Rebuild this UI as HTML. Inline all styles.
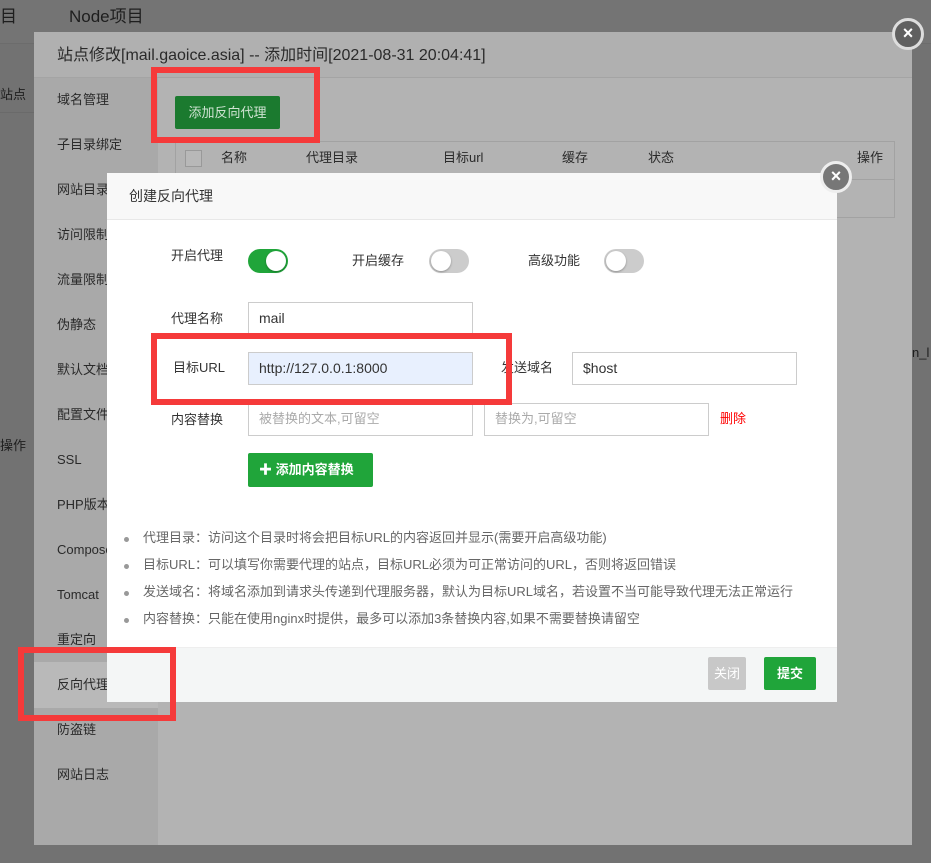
<!DOCTYPE html>
<html><head><meta charset="utf-8"><style>
*{box-sizing:border-box;margin:0;padding:0}
body{width:931px;height:863px;overflow:hidden;background:#727272;font-family:"Liberation Sans","Noto Sans CJK SC",sans-serif;position:relative;font-size:13px;color:#333;line-height:1.2}
.abs{position:absolute}
.d1{left:34px;top:32px;width:878px;height:813px;background:#b3b3b3}
.d1h{left:0;top:0;width:878px;height:46px;background:#b0b0b0;border-bottom:1px solid #a4a4a4;font-size:16px;color:#2a2a2a;padding:14px 0 0 23px}
.side{left:0;top:46px;width:124px;height:767px;background:#a9a9a9}
.side div{position:absolute;left:23px;font-size:13px;color:#2a2a2a;white-space:nowrap}
.m{left:107px;top:173px;width:730px;height:529px;background:#fff}
.mh{left:0;top:0;width:730px;height:47px;background:#f8f8f8;border-bottom:1px solid #e8e8e8;font-size:14px;padding:15px 0 0 22px;color:#333}
.lbl{font-size:13px;color:#333;position:absolute}
.inp{position:absolute;height:33px;border:1px solid #ccc;background:#fff;font-size:14px;color:#333;padding:7px 0 0 10px}
.ph{color:#aaa;font-size:13px}
.tg{position:absolute;width:40px;height:24px;border-radius:12px;background:#ccc}
.tg i{position:absolute;top:2px;width:20px;height:20px;border-radius:50%;background:#fff;box-shadow:0 1px 2px rgba(0,0,0,.3)}
.close{position:absolute;width:32px;height:32px;border-radius:50%;border:3px solid #fff;color:#fff;font-size:18px;text-align:center;line-height:25px;font-weight:bold}
.red{position:absolute;border:6px solid #f53a3a}
li{list-style:none;position:absolute;left:18px;font-size:13px;color:#666;white-space:nowrap}
li:before{content:"";position:absolute;left:-1px;top:7px;width:5px;height:5px;border-radius:50%;background:#999}
li span{margin-left:18px}
</style></head><body>
<div class="abs" style="left:0;top:0;width:931px;height:44px;background:#747474;border-bottom:1px solid #6c6c6c"></div>
<div class="abs" style="left:0;top:7px;font-size:17px;color:#1e1e1e">目</div>
<div class="abs" style="left:69px;top:7px;font-size:17px;color:#1e1e1e">Node项目</div>
<div class="abs" style="left:0;top:87px;font-size:13px;color:#1e1e1e">站点</div>
<div class="abs" style="left:0;top:112px;width:34px;height:1px;background:#6a6a6a"></div>
<div class="abs" style="left:0;top:438px;font-size:13px;color:#1e1e1e">操作</div>
<div class="abs" style="left:912px;top:345px;font-size:13px;color:#1e1e1e">n_l</div>

<div class="abs d1">
 <div class="abs d1h">站点修改[mail.gaoice.asia] -- 添加时间[2021-08-31 20:04:41]</div>
 <div class="abs side">
  <div style="top:14px">域名管理</div>
  <div style="top:59px">子目录绑定</div>
  <div style="top:104px">网站目录</div>
  <div style="top:149px">访问限制</div>
  <div style="top:194px">流量限制</div>
  <div style="top:239px">伪静态</div>
  <div style="top:284px">默认文档</div>
  <div style="top:329px">配置文件</div>
  <div style="top:374px">SSL</div>
  <div style="top:419px">PHP版本</div>
  <div style="top:464px">Composer</div>
  <div style="top:509px">Tomcat</div>
  <div style="top:554px">重定向</div>
  <div style="top:584px;left:0;width:124px;height:46px;background:#b9b9b9"></div>
  <div style="top:599px">反向代理</div>
  <div style="top:644px">防盗链</div>
  <div style="top:689px">网站日志</div>
 </div>
 <div class="abs" style="left:141px;top:64px;width:105px;height:33px;background:#1b7a2f;border-radius:2px;color:#cfe3d2;font-size:13px;text-align:center;line-height:33px">添加反向代理</div>
 <div class="abs" style="left:141px;top:109px;width:720px;height:77px;border:1px solid #a2a2a2"></div>
 <div class="abs" style="left:141px;top:109px;width:720px;height:39px;border-bottom:1px solid #a2a2a2;font-size:13px;color:#2a2a2a">
  <span class="abs" style="left:10px;top:9px;width:17px;height:17px;border:1px solid #999;background:#b8b8b8"></span>
  <span class="abs" style="left:46px;top:9px">名称</span>
  <span class="abs" style="left:131px;top:9px">代理目录</span>
  <span class="abs" style="left:268px;top:9px">目标url</span>
  <span class="abs" style="left:387px;top:9px">缓存</span>
  <span class="abs" style="left:473px;top:9px">状态</span>
  <span class="abs" style="left:682px;top:9px">操作</span>
 </div>
</div>
<div class="close" style="left:892px;top:18px;background:#606060;border-color:#ddd">×</div>

<div class="abs m">
 <div class="abs mh">创建反向代理</div>
 <div class="lbl" style="left:64px;top:75px">开启代理</div>
 <div class="tg" style="left:141px;top:76px;background:#20a53a"><i style="left:18px"></i></div>
 <div class="lbl" style="left:245px;top:80px">开启缓存</div>
 <div class="tg" style="left:322px;top:76px"><i style="left:2px"></i></div>
 <div class="lbl" style="left:421px;top:80px">高级功能</div>
 <div class="tg" style="left:497px;top:76px"><i style="left:2px"></i></div>
 <div class="lbl" style="left:64px;top:138px">代理名称</div>
 <div class="inp" style="left:141px;top:129px;width:225px">mail</div>
 <div class="lbl" style="left:66px;top:187px">目标URL</div>
 <div class="inp" style="left:141px;top:179px;width:225px;background:#e8f0fe">http://127.0.0.1:8000</div>
 <div class="lbl" style="left:394px;top:187px">发送域名</div>
 <div class="inp" style="left:465px;top:179px;width:225px">$host</div>
 <div class="lbl" style="left:64px;top:239px">内容替换</div>
 <div class="inp ph" style="left:141px;top:230px;width:225px;font-size:13px">被替换的文本,可留空</div>
 <div class="inp ph" style="left:377px;top:230px;width:225px;font-size:13px">替换为,可留空</div>
 <div class="lbl" style="left:613px;top:238px;color:#f00">删除</div>
 <div class="abs" style="left:141px;top:280px;width:125px;height:34px;background:#20a53a;border-radius:2px;color:#fff;font-size:13px;font-weight:bold;line-height:34px;padding-left:11px">✚ 添加内容替换</div>
 <ul>
  <li style="top:357px"><span>代理目录：访问这个目录时将会把目标URL的内容返回并显示(需要开启高级功能)</span></li>
  <li style="top:384px"><span>目标URL：可以填写你需要代理的站点，目标URL必须为可正常访问的URL，否则将返回错误</span></li>
  <li style="top:411px"><span>发送域名：将域名添加到请求头传递到代理服务器，默认为目标URL域名，若设置不当可能导致代理无法正常运行</span></li>
  <li style="top:438px"><span>内容替换：只能在使用nginx时提供，最多可以添加3条替换内容,如果不需要替换请留空</span></li>
 </ul>
 <div class="abs" style="left:0;top:474px;width:730px;height:55px;background:#f4f6f6;border-top:1px solid #eee"></div>
 <div class="abs" style="left:601px;top:484px;width:38px;height:33px;background:#c8c8c8;border-radius:2px;color:#fff;text-align:center;line-height:33px">关闭</div>
 <div class="abs" style="left:657px;top:484px;width:52px;height:33px;background:#20a53a;border-radius:2px;color:#fff;text-align:center;line-height:33px;font-weight:bold">提交</div>
</div>
<div class="close" style="left:820px;top:161px;background:#777;border-color:#eee">×</div>

<div class="red" style="left:151px;top:67px;width:169px;height:76px"></div>
<div class="red" style="left:151px;top:333px;width:361px;height:72px"></div>
<div class="red" style="left:18px;top:647px;width:158px;height:74px"></div>
</body></html>
